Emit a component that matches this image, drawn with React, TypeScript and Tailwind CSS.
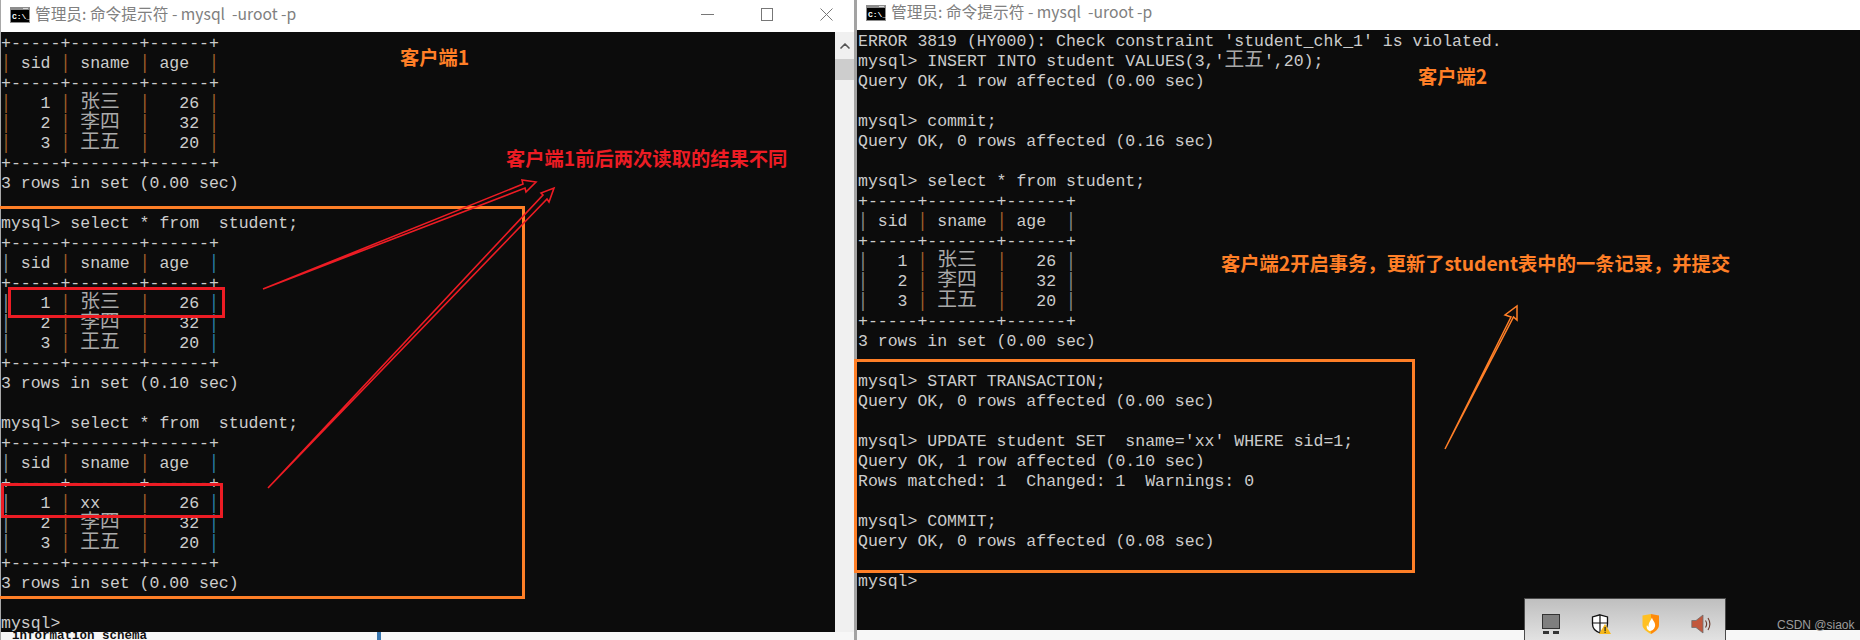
import React from "react";
import { ChevronUp } from "lucide-react";

const ORANGE = "#ff7f27";
const RED = "#ed1c24";

function Line({ text, bars }: { text: string; bars?: string[] }) {
  let barIdx = 0;
  const parts = text.split(/([\u4e00-\u9fff]+|\|)/).filter((p) => p.length > 0);
  return (
    <div className="h-5 leading-5 whitespace-pre overflow-visible">
      {parts.map((p, i) => {
        if (p === "|") {
          const c = bars ? bars[barIdx++] : "#a0602a";
          return (
            <span key={i} className="inline-block scale-y-[1.25]" style={{ color: c }}>
              |
            </span>
          );
        }
        if (/^[\u4e00-\u9fff]/.test(p)) {
          return (
            <span key={i} className="text-[19.8px] leading-[0] text-[#a9a9a9] font-['Noto_Sans_CJK_SC',sans-serif]">
              {p}
            </span>
          );
        }
        return <span key={i}>{p}</span>;
      })}
    </div>
  );
}

const B1 = ["#a0602a", "#a0602a", "#a0602a", "#a0602a"];
const B2 = ["#8a97a5", "#a0602a", "#a0602a", "#2a7fa8"];
const B3 = ["#8a8a8a", "#a0602a", "#a0602a", "#8a8a8a"];

const BORDER = "+-----+-------+------+";
const HEAD = "| sid | sname | age  |";

function Table({ first, bars }: { first: string; bars: string[] }) {
  return (
    <>
      <Line text={BORDER} />
      <Line text={HEAD} bars={bars} />
      <Line text={BORDER} />
      <Line text={first} bars={bars} />
      <Line text="|   2 | 李四  |   32 |" bars={bars} />
      <Line text="|   3 | 王五  |   20 |" bars={bars} />
      <Line text={BORDER} />
    </>
  );
}

function ConsoleIcon() {
  return (
    <svg width="20" height="16" viewBox="0 0 20 16" className="shrink-0">
      <rect x="0" y="0" width="20" height="16" fill="#8d8d8d" />
      <rect x="1" y="3" width="18" height="12" fill="#000" />
      <rect x="13" y="1" width="5" height="1" fill="#d8d8d8" />
      <text x="2" y="12" fontSize="8" fontWeight="700" fill="#fff" fontFamily="'Liberation Mono', monospace">
        C:\_
      </text>
    </svg>
  );
}

function Title() {
  return (
    <span className="text-[15.7px] leading-none -mt-0.5 text-[#808080] whitespace-pre font-['Noto_Sans_CJK_SC',sans-serif]">
      管理员: 命令提示符 - mysql  -uroot -p
    </span>
  );
}

function TrayIcons() {
  return (
    <div className="flex items-start gap-[30px] pl-4 pt-[15px]">
      <svg width="20" height="20" viewBox="0 0 20 20">
        <rect x="1.5" y="0.5" width="17" height="14" fill="#7f7f7f" stroke="#333" strokeWidth="1" />
        <rect x="2" y="17" width="6" height="3" fill="#333" />
        <rect x="12" y="17" width="6" height="3" fill="#333" />
      </svg>
      <svg width="20" height="20" viewBox="0 0 20 20">
        <path d="M9 0.8 L16.5 3 V10 C16.5 14.5 13 17.5 9 19 C5 17.5 1.5 14.5 1.5 10 V3 Z" fill="#fff" stroke="#111" strokeWidth="1.3" />
        <path d="M9 1 V19 M1.5 9 H16.5" stroke="#111" strokeWidth="1.2" />
        <path d="M14 10 L20 20 H8 Z" fill="#f6b81a" />
        <rect x="13.5" y="13" width="1.2" height="4" fill="#222" />
        <rect x="13.5" y="17.7" width="1.2" height="1.2" fill="#222" />
      </svg>
      <svg width="20" height="20" viewBox="0 0 20 20">
        <defs>
          <linearGradient id="fireShield" x1="0" x2="1" y1="0" y2="0">
            <stop offset="0.5" stopColor="#ffc023" />
            <stop offset="0.5" stopColor="#ff8b0a" />
          </linearGradient>
        </defs>
        <path d="M1.5 1.5 L10 0 L18 1.5 V11 C18 15 14 18 10 20 C6 18 1.5 15 1.5 11 Z" fill="url(#fireShield)" />
        <path d="M11 3.5 C11.5 7 15 8.5 14 12.5 C13.3 15.5 10.5 17 8.5 17 C6 16 5 13.5 6 11 C6.5 12 7 12.5 7.8 12.7 C7 9.5 9.5 7 11 3.5 Z" fill="#fff" />
      </svg>
      <svg width="20" height="20" viewBox="0 0 20 20">
        <path d="M0.8 6.5 H5 L12 1 V19 L5 13.5 H0.8 Z" fill="#c2573c" stroke="#6f6f6f" strokeWidth="0.8" />
        <path d="M14.5 6.5 C15.8 8.5 15.8 11.5 14.5 13.5" fill="none" stroke="#6b3a2c" strokeWidth="1.1" />
        <path d="M17 4 C19.2 7.5 19.2 12.5 17 16" fill="none" stroke="#6b3a2c" strokeWidth="1.1" />
      </svg>
    </div>
  );
}

export default function App() {
  return (
    <div className="relative w-[1860px] h-[640px] overflow-hidden bg-white flex font-['Liberation_Mono',monospace] text-[16.5px] text-[#cccccc]">
      {/* Left window */}
      <div className="w-[857px] h-full shrink-0 flex flex-col border-l border-l-[#a8a8a8] border-r-[3px] border-r-[#a3a3a3]">
        <div className="h-8 shrink-0 bg-white flex items-center pl-[9px] pb-[3px] gap-[5px]">
          <ConsoleIcon />
          <Title />
          <div className="ml-auto flex items-center gap-[47px] pr-[21px] text-[#777]">
            <svg width="13" height="13" viewBox="0 0 13 13">
              <path d="M0 6.5 H13" stroke="#777" strokeWidth="1" />
            </svg>
            <svg width="12" height="13" viewBox="0 0 12 13">
              <rect x="0.5" y="0.5" width="11" height="12" fill="none" stroke="#777" />
            </svg>
            <svg width="13" height="13" viewBox="0 0 13 13">
              <path d="M0.5 0.5 L12.5 12.5 M12.5 0.5 L0.5 12.5" stroke="#777" strokeWidth="1" />
            </svg>
          </div>
        </div>
        <div className="h-[600px] shrink-0 flex">
          <div className="w-[834px] h-full bg-[#0c0c0c] overflow-hidden pt-[2px]">
            <Line text={BORDER} />
            <Line text={HEAD} bars={B1} />
            <Line text={BORDER} />
            <Line text="|   1 | 张三  |   26 |" bars={B1} />
            <Line text="|   2 | 李四  |   32 |" bars={B1} />
            <Line text="|   3 | 王五  |   20 |" bars={B1} />
            <Line text={BORDER} />
            <Line text="3 rows in set (0.00 sec)" />
            <Line text=" " />
            <Line text="mysql> select * from  student;" />
            <Table first="|   1 | 张三  |   26 |" bars={B2} />
            <Line text="3 rows in set (0.10 sec)" />
            <Line text=" " />
            <Line text="mysql> select * from  student;" />
            <Table first="|   1 | xx    |   26 |" bars={B2} />
            <Line text="3 rows in set (0.00 sec)" />
            <Line text=" " />
            <Line text="mysql>" />
          </div>
          <div className="flex-1 bg-[#f0f0f0] flex flex-col">
            <div className="h-[27px] flex items-center justify-center text-[#555]">
              <ChevronUp size={16} strokeWidth={2.5} />
            </div>
            <div className="h-[21px] bg-[#cdcdcd]" />
          </div>
        </div>
        <div className="flex-1 bg-[#f7f7f7] flex overflow-hidden text-[#111]">
          <span className="w-[376px] pl-[11px] text-[12.5px] leading-[8px] font-bold whitespace-pre">information_schema</span>
          <span className="w-1 h-full bg-[#3a78b0]" />
        </div>
      </div>

      {/* Right window */}
      <div className="flex-1 h-full flex flex-col">
        <div className="h-[30px] shrink-0 bg-white flex items-center pl-[9px] pb-[5px] gap-[5px]">
          <ConsoleIcon />
          <Title />
        </div>
        <div className="h-[600px] shrink-0 bg-[#0c0c0c] overflow-hidden pt-[2px] pl-px">
          <Line text="ERROR 3819 (HY000): Check constraint 'student_chk_1' is violated." />
          <Line text="mysql> INSERT INTO student VALUES(3,'王五',20);" />
          <Line text="Query OK, 1 row affected (0.00 sec)" />
          <Line text=" " />
          <Line text="mysql> commit;" />
          <Line text="Query OK, 0 rows affected (0.16 sec)" />
          <Line text=" " />
          <Line text="mysql> select * from student;" />
          <Table first="|   1 | 张三  |   26 |" bars={B3} />
          <Line text="3 rows in set (0.00 sec)" />
          <Line text=" " />
          <Line text="mysql> START TRANSACTION;" />
          <Line text="Query OK, 0 rows affected (0.00 sec)" />
          <Line text=" " />
          <Line text="mysql> UPDATE student SET  sname='xx' WHERE sid=1;" />
          <Line text="Query OK, 1 row affected (0.10 sec)" />
          <Line text="Rows matched: 1  Changed: 1  Warnings: 0" />
          <Line text=" " />
          <Line text="mysql> COMMIT;" />
          <Line text="Query OK, 0 rows affected (0.08 sec)" />
          <Line text=" " />
          <Line text="mysql>" />
        </div>
        <div className="flex-1 bg-[#f7f7f7]" />
      </div>

      {/* Annotations drawn over the screenshots */}
      <div className="absolute left-[-3px] top-[206px] w-[528px] h-[393px] border-[3px] border-[#ff7f27]" />
      <div className="absolute left-[8px] top-[287px] w-[217px] h-[31px] border-[3px] border-[#ed1c24]" />
      <div className="absolute left-[1px] top-[483px] w-[222px] h-[35px] border-[3px] border-[#ed1c24]" />
      <div className="absolute left-[854px] top-[359px] w-[561px] h-[214px] border-[3px] border-[#ff7f27]" />

      <svg className="absolute left-0 top-0 pointer-events-none" width="1860" height="640" viewBox="0 0 1860 640" fill="none">
        <path d="M263 289 L523 184 L522 180 L536 182 L526 192 L525 188 Z" stroke={RED} strokeWidth="1.6" />
        <path d="M268 488 L543 195 L541 193 L554 188 L549 202 L547 199 Z" stroke={RED} strokeWidth="1.6" />
        <path d="M1445 449 L1511 317 L1505 315 L1517 306 L1517 320 L1513.5 317 Z" stroke={ORANGE} strokeWidth="1.5" />
      </svg>

      <span className="absolute left-[400px] top-[44px] text-[19.3px] leading-[26px] font-bold text-[#ff7f27] font-['Noto_Sans_CJK_SC',sans-serif]">客户端1</span>
      <span className="absolute left-[506px] top-[145px] text-[19.3px] leading-[26px] font-bold text-[#ed1c24] whitespace-pre font-['Noto_Sans_CJK_SC',sans-serif]">客户端1前后两次读取的结果不同</span>
      <span className="absolute left-[1418px] top-[63px] text-[19.3px] leading-[26px] font-bold text-[#ff7f27] font-['Noto_Sans_CJK_SC',sans-serif]">客户端2</span>
      <span className="absolute left-[1221px] top-[250px] text-[19.3px] leading-[26px] font-bold text-[#ff7f27] whitespace-pre font-['Noto_Sans_CJK_SC',sans-serif]">客户端2开启事务，更新了student表中的一条记录，并提交</span>

      <span className="absolute left-[1777px] top-[618px] text-xs leading-[14px] text-[#9c9c9c] font-['Liberation_Sans',sans-serif]">CSDN @siaok</span>

      <div className="absolute left-[1524px] top-[598px] w-[202px] h-[42px] border border-b-0 border-[#4a4a4a] bg-gradient-to-b from-[#bfbfbf] to-[#e2e2e2]">
        <TrayIcons />
      </div>
    </div>
  );
}
